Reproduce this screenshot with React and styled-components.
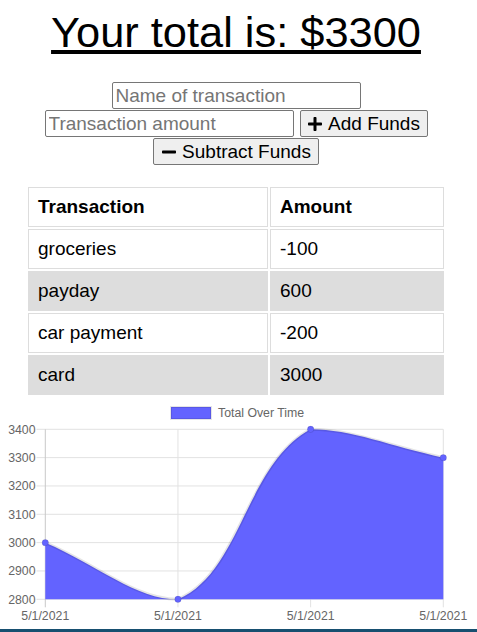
import React from "react";
import styled, { createGlobalStyle } from "styled-components";
import { FaPlus, FaMinus } from "react-icons/fa";

const GlobalStyle = createGlobalStyle`
html {
     overflow: hidden;
}
body {
     margin: 8px 0 0;
     font-family: "Liberation Sans", Arial, sans-serif;
     color: #000;
     background: #fff;
}
`

const Page = styled.div`
width: 456px;
margin-left: 8px;
display: flex;
flex-direction: column;
`
const Title = styled.h1`
margin: 0;
font-size: 43.4px;
font-weight: normal;
line-height: 49px;
text-align: center;
text-decoration: underline;
white-space: nowrap;
`
const Form = styled.div`
margin-top: 25px;
display: flex;
flex-direction: column;
align-items: center;
gap: 1px;
`
const FormRow = styled.div`
display: flex;
flex-direction: row;
align-items: center;
gap: 6px;
`
const Input = styled.input`
box-sizing: border-box;
width: 249px;
height: 27px;
padding: 1px 3px;
font-family: "Liberation Sans", Arial, sans-serif;
font-size: 19px;
border: 1px solid #767676;
border-radius: 2px;
background: #fff;
&::placeholder {
     color: #757575;
}
`
const Button = styled.button`
box-sizing: border-box;
min-width: ${(p) => p.$w}px;
height: 27px;
display: inline-flex;
align-items: center;
justify-content: center;
gap: 5px;
padding: 0 6px;
font-family: "Liberation Sans", Arial, sans-serif;
font-size: 19px;
white-space: nowrap;
color: #000;
background: #efefef;
border: 1px solid #767676;
border-radius: 2px;
& svg {
     flex: none;
}
`
const Table = styled.table`
margin: 20px auto 0;
width: 420px;
border-collapse: separate;
border-spacing: 2px;
font-size: 19px;
text-align: left;
`
const Row = styled.tr`
background: ${(p) => (p.$alt ? "#dddddd" : "#fff")};
`
const HeadCell = styled.th`
box-sizing: border-box;
height: 40px;
padding: 0 9px;
border: 1px solid #dddddd;
font-weight: bold;
width: ${(p) => p.$w || "auto"};
`
const Cell = styled.td`
box-sizing: border-box;
height: 40px;
padding: 0 9px;
border: 1px solid #dddddd;
`
const ChartBox = styled.div`
height: 232px;
& svg {
     display: block;
     overflow: visible;
}
`
const BottomBar = styled.div`
height: 3px;
width: 100%;
background: #174f70;
`

const transactions = [
     { name: "groceries", value: -100 },
     { name: "payday", value: 600 },
     { name: "car payment", value: -200 },
     { name: "card", value: 3000 },
];

const values = [3000, 2800, 3400, 3300];
const dates = ["5/1/2021", "5/1/2021", "5/1/2021", "5/1/2021"];
const area = { left: 37.3, right: 435.3, top: 32.3, bottom: 202.3 };
const yMin = 2800;
const yMax = 3400;

const toY = (v) => area.bottom - ((v - yMin) / (yMax - yMin)) * (area.bottom - area.top);
const points = values.map((v, i) => ({
     x: area.left + (i * (area.right - area.left)) / (values.length - 1),
     y: toY(v),
}));

// chart.js style spline with capped control points
const buildPath = (pts, t) => {
     const cx = (v) => Math.max(area.left, Math.min(area.right, v));
     const cy = (v) => Math.max(area.top, Math.min(area.bottom, v));
     const cps = pts.map((p, i) => {
          const prev = pts[i - 1] || p;
          const next = pts[i + 1] || p;
          const d01 = Math.hypot(p.x - prev.x, p.y - prev.y);
          const d12 = Math.hypot(next.x - p.x, next.y - p.y);
          const sum = d01 + d12;
          const fa = sum ? (t * d01) / sum : 0;
          const fb = sum ? (t * d12) / sum : 0;
          return {
               px: cx(p.x - fa * (next.x - prev.x)),
               py: cy(p.y - fa * (next.y - prev.y)),
               nx: cx(p.x + fb * (next.x - prev.x)),
               ny: cy(p.y + fb * (next.y - prev.y)),
          };
     });
     let d = `M${pts[0].x},${pts[0].y}`;
     for (let i = 1; i < pts.length; i++) {
          d += ` C${cps[i - 1].nx},${cps[i - 1].ny} ${cps[i].px},${cps[i].py} ${pts[i].x},${pts[i].y}`;
     }
     return d;
};

const TotalChart = () => {
     const line = buildPath(points, 0.4);
     const first = points[0];
     const last = points[points.length - 1];
     const fill = `${line} L${last.x},${area.bottom} L${first.x},${area.bottom} Z`;
     const ticks = [];
     for (let v = yMax; v >= yMin; v -= 100) ticks.push(v);
     const font = { fontFamily: "Liberation Sans, Arial, sans-serif", fontSize: 12.3, fill: "#666" };
     return (
          <svg width="456" height="232" viewBox="0 0 456 232">
               <rect x="163" y="10" width="40" height="12" fill="#6363ff" stroke="rgba(0,0,0,0.1)" strokeWidth="2" />
               <text x="210" y="20" {...font}>Total Over Time</text>
               {ticks.map((v) => (
                    <g key={v}>
                         <line x1="28.5" x2={area.right} y1={toY(v)} y2={toY(v)} stroke="#e2e2e2" strokeWidth="1" />
                         <text x="27.5" y={toY(v) + 4.3} textAnchor="end" {...font}>{v}</text>
                    </g>
               ))}
               {points.map((p, i) => (
                    <g key={i}>
                         <line x1={p.x} x2={p.x} y1={area.top} y2={area.bottom + 8} stroke={i === 0 ? "#c9c9c9" : "#e2e2e2"} strokeWidth="1" />
                         <text x={p.x} y="223.3" textAnchor="middle" {...font}>{dates[i]}</text>
                    </g>
               ))}
               <path d={fill} fill="#6363ff" />
               <path d={line} fill="none" stroke="rgba(0,0,0,0.1)" strokeWidth="3" />
               {points.map((p, i) => (
                    <circle key={i} cx={p.x} cy={p.y} r="3.2" fill="#6363ff" stroke="rgba(0,0,0,0.1)" strokeWidth="1" />
               ))}
          </svg>
     );
};

const App = () => {
     return (
          <>
               <GlobalStyle />
               <Page>
                    <Title>Your total is: $3300</Title>
                    <Form>
                         <FormRow>
                              <Input type="text" placeholder="Name of transaction" />
                         </FormRow>
                         <FormRow>
                              <Input type="number" placeholder="Transaction amount" />
                              <Button $w={128}><FaPlus size={16} /> Add Funds</Button>
                         </FormRow>
                         <FormRow>
                              <Button $w={166}><FaMinus size={16} /> Subtract Funds</Button>
                         </FormRow>
                    </Form>
                    <Table>
                         <thead>
                              <Row>
                                   <HeadCell $w="240px">Transaction</HeadCell>
                                   <HeadCell>Amount</HeadCell>
                              </Row>
                         </thead>
                         <tbody>
                              {transactions.map((t, i) => (
                                   <Row key={t.name} $alt={i % 2 === 1}>
                                        <Cell>{t.name}</Cell>
                                        <Cell>{t.value}</Cell>
                                   </Row>
                              ))}
                         </tbody>
                    </Table>
                    <ChartBox>
                         <TotalChart />
                    </ChartBox>
               </Page>
               <BottomBar />
          </>
     );
};

export default App;
